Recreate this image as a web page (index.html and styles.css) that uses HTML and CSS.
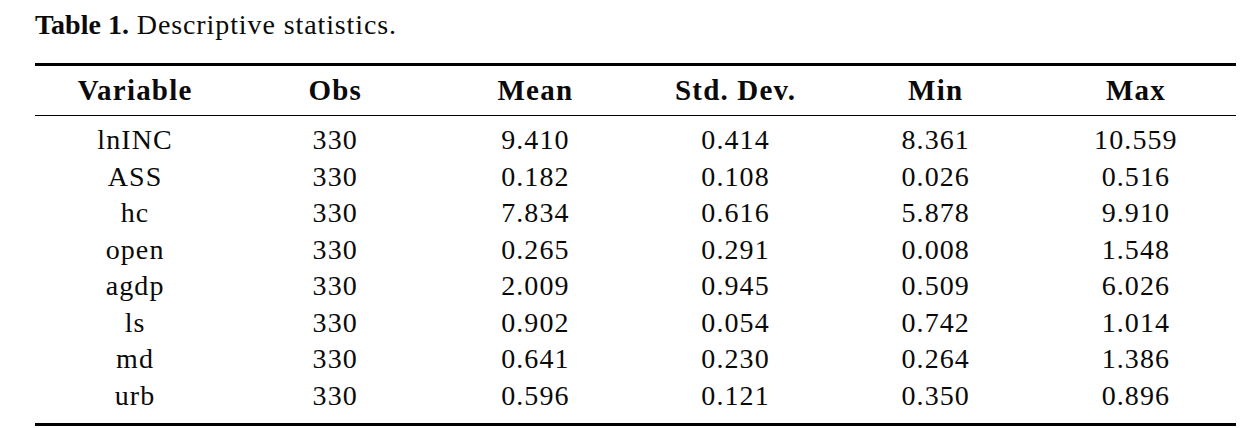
FILE: index.html
```html
<!DOCTYPE html>
<html>
<head>
<meta charset="utf-8">
<link rel="stylesheet" href="styles.css">
</head>
<body>
<div class="page">
  <p class="caption"><b>Table 1.</b> Descriptive statistics.</p>
  <table class="stats">
    <thead>
      <tr><th>Variable</th><th>Obs</th><th>Mean</th><th>Std. Dev.</th><th>Min</th><th>Max</th></tr>
    </thead>
    <tbody>
      <tr class="first"><td>lnINC</td><td>330</td><td>9.410</td><td>0.414</td><td>8.361</td><td>10.559</td></tr>
      <tr><td>ASS</td><td>330</td><td>0.182</td><td>0.108</td><td>0.026</td><td>0.516</td></tr>
      <tr><td>hc</td><td>330</td><td>7.834</td><td>0.616</td><td>5.878</td><td>9.910</td></tr>
      <tr><td>open</td><td>330</td><td>0.265</td><td>0.291</td><td>0.008</td><td>1.548</td></tr>
      <tr><td>agdp</td><td>330</td><td>2.009</td><td>0.945</td><td>0.509</td><td>6.026</td></tr>
      <tr><td>ls</td><td>330</td><td>0.902</td><td>0.054</td><td>0.742</td><td>1.014</td></tr>
      <tr><td>md</td><td>330</td><td>0.641</td><td>0.230</td><td>0.264</td><td>1.386</td></tr>
      <tr class="last"><td>urb</td><td>330</td><td>0.596</td><td>0.121</td><td>0.350</td><td>0.896</td></tr>
    </tbody>
  </table>
</div>
</body>
</html>
```
FILE: styles.css
```css
html, body {
  margin: 0;
  padding: 0;
  background: #fff;
}
.page {
  padding: 9px 0 0 35px;
  font-family: "Liberation Serif", "DejaVu Serif", serif;
  color: #0a0a0a;
}
.caption {
  margin: 0;
  font-size: 28px;
  line-height: 32px;
  letter-spacing: 0.9px;
}
.caption b {
  letter-spacing: 0;
}
.stats {
  margin-top: 22px;
  width: 1201px;
  border-collapse: collapse;
  table-layout: fixed;
  border-top: 3px solid #000;
  border-bottom: 3px solid #000;
}
.stats th {
  font-weight: bold;
  font-size: 29px;
  letter-spacing: 1.2px;
  height: 49px;
  padding: 0;
  text-align: center;
  border-bottom: 1px solid #000;
  vertical-align: middle;
}
.stats td {
  font-size: 28px;
  letter-spacing: 1.1px;
  line-height: 36.5px;
  padding: 0;
  text-align: center;
}
.stats tr.first td {
  padding-top: 6px;
}
.stats tr.last td {
  padding-bottom: 9px;
}
```
